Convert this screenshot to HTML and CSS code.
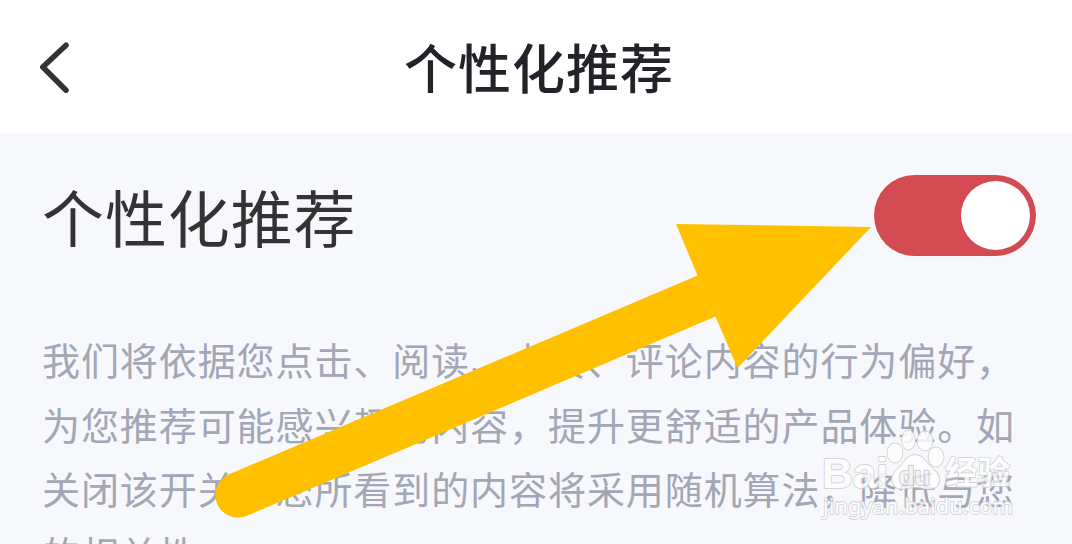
FILE: index.html
```html
<!DOCTYPE html>
<html lang="zh-CN">
<head>
  <meta charset="UTF-8">
  <title>个性化推荐</title>
  <link rel="stylesheet" href="styles.css">
</head>
<body>

  <header class="navbar">
    <svg class="back" width="36" height="56" viewBox="0 0 36 56">
      <path d="M30 6.2 L6.8 28 L30 51.2"/>
    </svg>
    <h1>个性化推荐</h1>
  </header>

  <main class="content">
    <div class="setting">
      <h2>个性化推荐</h2>
      <div class="switch"><span class="knob"></span></div>
    </div>

    <p class="description">
      我们将依据您点击、阅读、点赞、评论内容的行为偏好，<br>
      为您推荐可能感兴趣的内容，提升更舒适的产品体验。如<br>
      关闭该开关，您所看到的内容将采用随机算法，降低与您<br>
      的相关性。
    </p>
  </main>

  <!-- arrow pointing at the switch -->
  <svg class="arrow" width="1072" height="544" viewBox="0 0 1072 544">
    <path d="M871 227 L676 224 L697.5 275.5 L229.1 474.2 A22.5 22.5 0 0 0 246.9 515.8 L715.5 316.5 L737.5 368 Z"/>
  </svg>

  <svg class="watermark" width="220" height="110" viewBox="0 0 220 110">
    <g class="logo">
      <text class="brand" x="12" y="68" textLength="66" lengthAdjust="spacingAndGlyphs">Bai</text>
      <ellipse cx="85" cy="33" rx="7.5" ry="9.5"/>
      <ellipse cx="98.5" cy="20" rx="6.5" ry="9.5"/>
      <ellipse cx="115" cy="21" rx="7.5" ry="9.5"/>
      <ellipse cx="126" cy="37" rx="7.5" ry="9.5"/>
      <path d="M105 35 C96 35 94 44 88 49 C83 53 80 58 84 65 C89 72 98 67 105 67 C112 67 120 72 127 66 C131 60 129 54 123 49 C116 44 114 35 105 35 Z"/>
      <text class="brand-cn" x="135" y="64" textLength="65" lengthAdjust="spacingAndGlyphs">经验</text>
      <text class="du" x="89" y="65" textLength="31" lengthAdjust="spacingAndGlyphs">du</text>
      <text class="site" x="13" y="94" textLength="190" lengthAdjust="spacingAndGlyphs">jingyan.baidu.com</text>
    </g>
  </svg>

</body>
</html>
```
FILE: styles.css
```css
body {
  margin: 0;
  height: 544px;
  overflow: hidden;
  position: relative;
  background-color: #f7f8fc;
  font-family: "Noto Sans CJK SC", sans-serif;
}

h1, h2, p {
  margin: 0;
}

.navbar {
  display: grid;
  grid-template-columns: 36px 1fr 36px;
  align-items: center;
  height: 133px;
  padding: 0 36px;
  box-sizing: border-box;
  background-color: #ffffff;
}

.back path {
  fill: none;
  stroke: #333333;
  stroke-width: 5.5;
  stroke-linecap: round;
  stroke-linejoin: round;
}

h1 {
  padding: 0 0 2px 6px;
  text-align: center;
  font-size: 53px;
  letter-spacing: 1px;
  font-weight: 500;
  line-height: 76px;
  color: #222329;
}

.content {
  height: 411px;
  padding: 42px 36px 0 42px;
  box-sizing: border-box;
  overflow: hidden;
}

.setting {
  display: flex;
  justify-content: space-between;
  align-items: flex-start;
  height: 152px;
}

h2 {
  font-size: 62px;
  letter-spacing: 0.9px;
  font-weight: 400;
  line-height: 82px;
  color: #333333;
}

.switch {
  display: flex;
  justify-content: flex-end;
  align-items: center;
  width: 162px;
  height: 81px;
  padding-right: 6px;
  box-sizing: border-box;
  border-radius: 41px;
  background-color: #d34a53;
}

.knob {
  width: 69px;
  height: 69px;
  border-radius: 50%;
  background-color: #ffffff;
}

.description {
  font-size: 38px;
  letter-spacing: 0.92px;
  line-height: 64.7px;
  color: #a3a6b5;
  white-space: nowrap;
}

.arrow {
  position: absolute;
  left: 0;
  top: 0;
  fill: #ffc000;
}

.watermark {
  position: absolute;
  left: 810px;
  top: 420px;
}

.logo {
  fill: #ffffff;
  stroke: #cdcdd0;
  stroke-width: 1.8;
  stroke-linejoin: round;
  paint-order: stroke;
  opacity: 0.82;
}

.brand {
  font: bold 42px "Liberation Sans", sans-serif;
}

.brand-cn {
  font: bold 32px "Noto Sans CJK SC", sans-serif;
}

.du {
  font: bold 26px "Liberation Sans", sans-serif;
  fill: #f4f4f6;
  stroke-width: 2.5;
}

.site {
  font: 21px "Noto Sans", sans-serif;
}
```
